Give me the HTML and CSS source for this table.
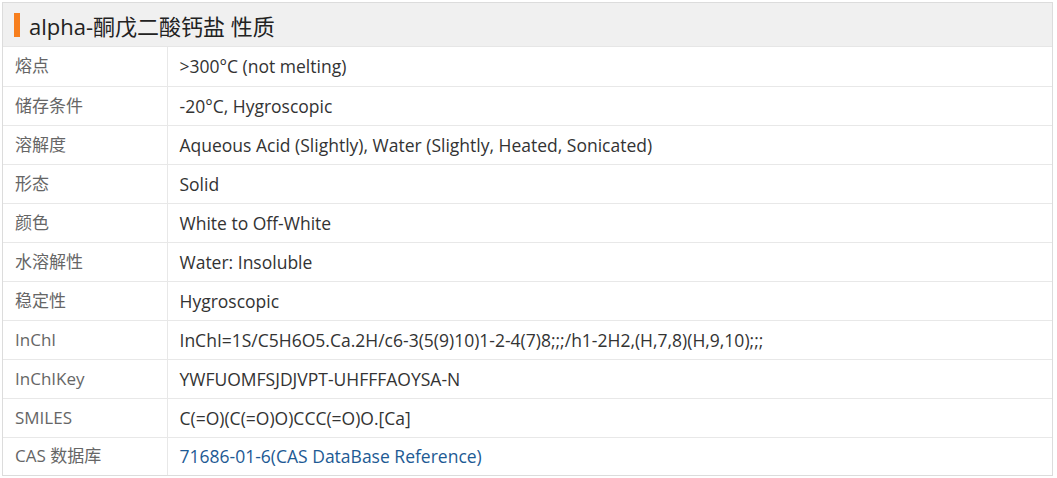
FILE: index.html
```html
<!DOCTYPE html>
<html lang="zh-CN">
<head>
<meta charset="utf-8">
<title>alpha-酮戊二酸钙盐 性质</title>
<link rel="stylesheet" href="styles.css">
</head>
<body>
<div class="panel">
  <div class="panel-head">
    <span class="bar"></span>
    <h2 class="title">alpha-酮戊二酸钙盐 性质</h2>
  </div>
  <table class="props">
    <tbody>
      <tr><td class="k">熔点</td><td class="v">&gt;300°C (not melting)</td></tr>
      <tr><td class="k">储存条件</td><td class="v">-20°C, Hygroscopic</td></tr>
      <tr><td class="k">溶解度</td><td class="v">Aqueous Acid (Slightly), Water (Slightly, Heated, Sonicated)</td></tr>
      <tr><td class="k">形态</td><td class="v">Solid</td></tr>
      <tr><td class="k">颜色</td><td class="v">White to Off-White</td></tr>
      <tr><td class="k">水溶解性</td><td class="v">Water: Insoluble</td></tr>
      <tr><td class="k">稳定性</td><td class="v">Hygroscopic</td></tr>
      <tr><td class="k">InChI</td><td class="v">InChI=1S/C5H6O5.Ca.2H/c6-3(5(9)10)1-2-4(7)8;;;/h1-2H2,(H,7,8)(H,9,10);;;</td></tr>
      <tr><td class="k">InChIKey</td><td class="v">YWFUOMFSJDJVPT-UHFFFAOYSA-N</td></tr>
      <tr><td class="k">SMILES</td><td class="v">C(=O)(C(=O)O)CCC(=O)O.[Ca]</td></tr>
      <tr class="last"><td class="k">CAS 数据库</td><td class="v"><a class="link" href="#">71686-01-6(CAS DataBase Reference)</a></td></tr>
    </tbody>
  </table>
</div>
</body>
</html>
```
FILE: styles.css
```css
html, body {
  margin: 0;
  padding: 0;
  background: #fff;
}
body {
  padding: 2px;
  font-family: "Open Sans", "Noto Sans CJK SC", sans-serif;
}
.panel {
  width: 1051px;
  box-sizing: border-box;
  border: 1px solid #dcdcdc;
}
.panel-head {
  height: 43px;
  background: #f0f0f0;
  border-bottom: 1px solid #e6e6e6;
  display: flex;
  align-items: center;
  padding-left: 11px;
  gap: 9px;
}
.bar {
  width: 6px;
  height: 24px;
  background: #f77f1e;
}
.title {
  margin: 0;
  font-size: 22px;
  font-weight: normal;
  color: #222;
  font-family: "Open Sans", "Noto Sans CJK SC", sans-serif;
}
.props {
  width: 100%;
  border-collapse: collapse;
  font-size: 17.5px;
}
.props tr {
  border-bottom: 1px solid #e8e8e8;
}
.props tr.last {
  border-bottom: none;
}
.props td {
  height: 39px;
  padding: 0 12px;
  box-sizing: border-box;
  vertical-align: middle;
  line-height: 22px;
}
.props tr.last td {
  height: 38px;
}
.k {
  width: 164px;
  color: #666;
  font-size: 17px;
  border-right: 1px solid #e8e8e8;
}
.v {
  color: #333;
}
.link {
  color: #1d5a94;
  text-decoration: none;
}
```
